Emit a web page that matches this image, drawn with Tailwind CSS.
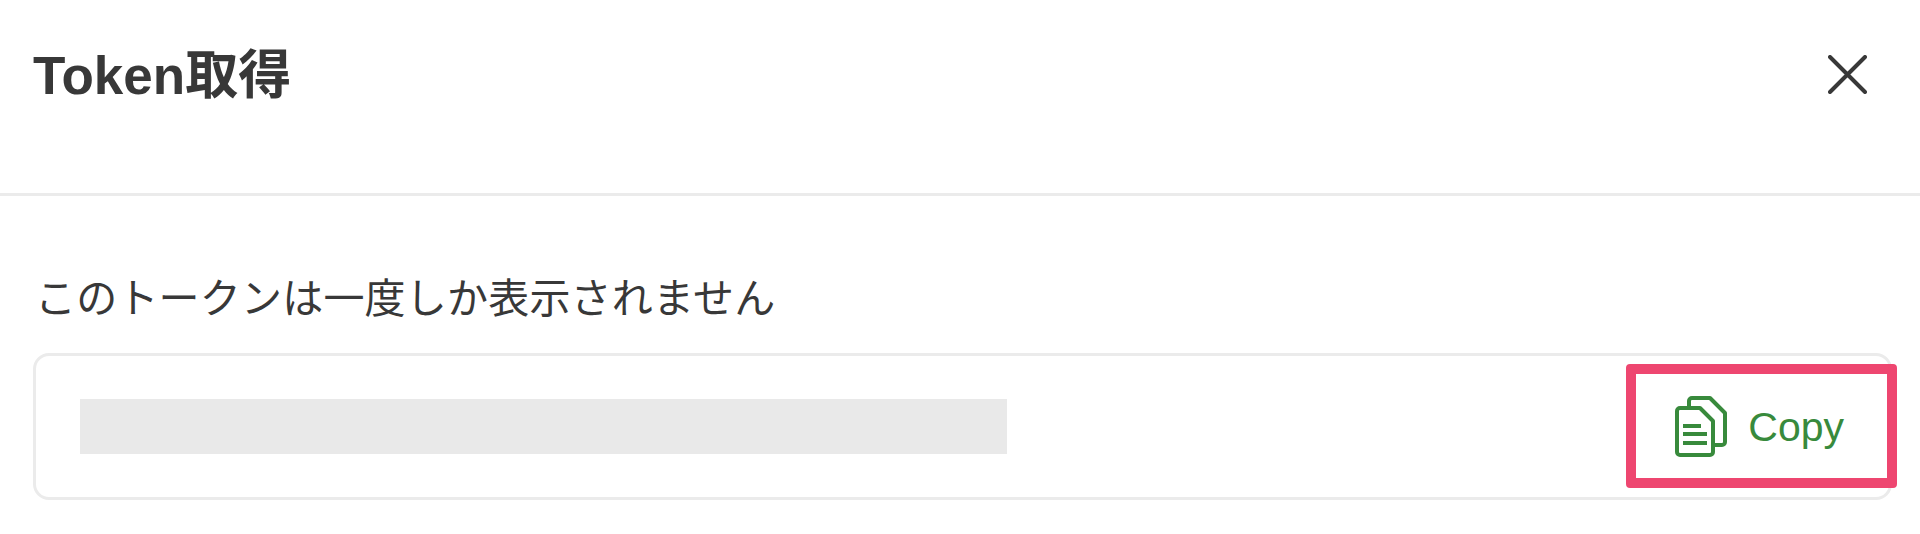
<!DOCTYPE html>
<html lang="ja">
<head>
  <meta charset="UTF-8" />
  <title>Token取得</title>
  <script src="https://cdn.jsdelivr.net/npm/@tailwindcss/browser@4"></script>
</head>
<body class="bg-white text-[#383838] font-['Liberation_Sans','Noto_Sans_CJK_JP',sans-serif] overflow-hidden">
  <div class="w-[1920px] h-[534px]">
    <!-- header -->
    <header class="h-[196px] border-b-[3px] border-[#ebebeb] flex items-start justify-between pl-[33px] pr-[53px]">
      <h1 class="mt-[46px] text-[53px] leading-[60px] font-bold">Token取得</h1>
      <button class="mt-[55px]">
        <svg class="block w-[39px] h-[39px]" viewBox="0 0 39 39" fill="none" stroke="#383838" stroke-width="4" stroke-linecap="round"><path d="M2 2 37 37M37 2 2 37"/></svg>
      </button>
    </header>

    <!-- body -->
    <section class="pl-[33px] pr-[28px]">
      <p class="mt-[78px] ml-[2px] text-[41px] leading-[50px] tracking-[0.2px]">このトークンは一度しか表示されません</p>
      <div class="relative mt-[29px] h-[147px] border-[3px] border-[#ebebeb] rounded-[16px] flex items-center justify-between pl-[44px] pr-[45px]">
        <div class="w-[927px] h-[55px] mb-[1px] bg-[#e9e9e9]"></div>
        <button class="flex items-center gap-[21px] text-[41px] leading-[48px] text-[#388a3c]">
          <svg class="block w-[52px] h-[61px]" viewBox="0 0 52 61" fill="none" stroke="#388a3c" stroke-width="4" stroke-linejoin="round">
            <path d="M14 10V5a3 3 0 0 1 3-3h18l15 15v29a3 3 0 0 1-3 3h-9"/>
            <path d="M5 12h20l13 13v31a3 3 0 0 1-3 3H5a3 3 0 0 1-3-3V15a3 3 0 0 1 3-3Z" fill="white"/>
            <path d="M8 30h18M8 38h24M8 47h24"/>
          </svg>
          <span>Copy</span>
        </button>
        <!-- annotation frame -->
        <div class="absolute right-[-8px] top-[8px] w-[271px] h-[124px] border-[10px] border-[#ee4670] rounded-[4px]"></div>
      </div>
    </section>
  </div>
</body>
</html>
